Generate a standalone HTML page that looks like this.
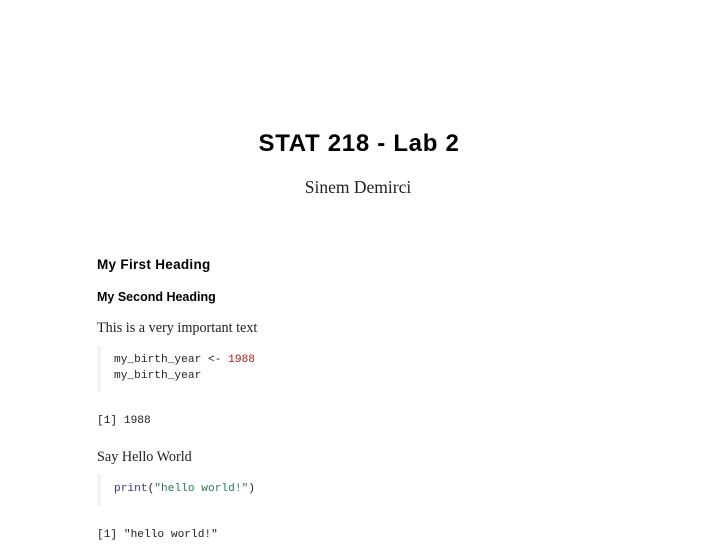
<!DOCTYPE html>
<html><head><style>
body{margin:0;width:708px;height:556px;background:#fff;position:relative;overflow:hidden;color:#000}
.a{position:absolute;white-space:nowrap;line-height:1}
.s{font-family:"Liberation Sans",sans-serif;font-weight:bold}
.r{font-family:"Liberation Serif",serif;color:#222}
.m{font-family:"Liberation Mono",monospace;font-size:11.2px;color:#222}
.bar{position:absolute;left:97px;width:4px;background:#f2f2f2}
</style></head><body>
<div class="a s" style="left:0;width:718px;text-align:center;top:132px;font-size:24px;letter-spacing:0.7px">STAT 218 - Lab 2</div>
<div class="a r" style="left:0;width:716px;text-align:center;top:179px;font-size:17.5px;">Sinem Demirci</div>
<div class="a s" style="left:97px;top:258px;font-size:13.5px;letter-spacing:0.3px">My First Heading</div>
<div class="a s" style="left:97px;top:291px;font-size:12.5px;">My Second Heading</div>
<div class="a r" style="left:97px;top:321px;font-size:14.2px;">This is a very important text</div>
<div class="bar" style="top:346px;height:46px"></div>
<div class="a m" style="left:114px;top:355px">my_birth_year &lt;- <span style="color:#b01c1c">1988</span></div>
<div class="a m" style="left:114px;top:371px">my_birth_year</div>
<div class="a m" style="left:97px;top:416px">[1] 1988</div>
<div class="a r" style="left:97px;top:450px;font-size:14.2px;">Say Hello World</div>
<div class="bar" style="top:474px;height:32px"></div>
<div class="a m" style="left:114px;top:484px"><span style="color:#3a3a8c">print</span>(<span style="color:#2a7a4a">"hello world!"</span>)</div>
<div class="a m" style="left:97px;top:530px">[1] "hello world!"</div>
</body></html>
